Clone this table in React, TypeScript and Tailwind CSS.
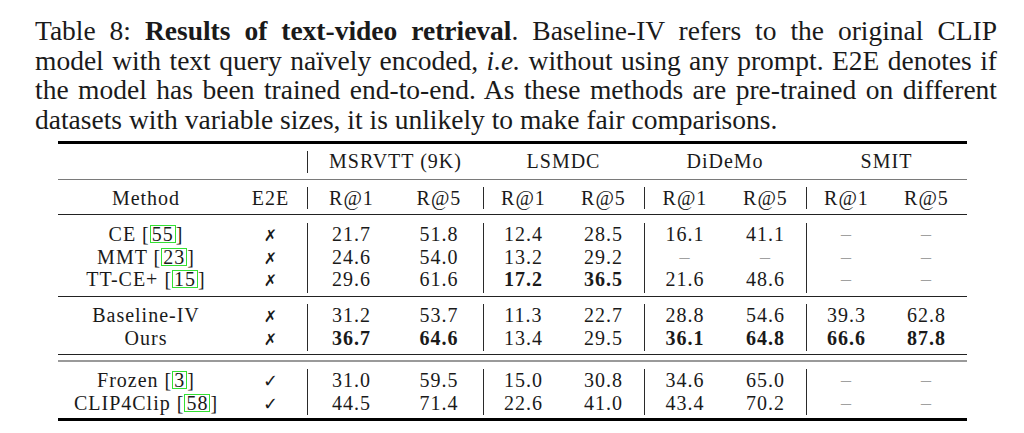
import React from "react";

type Row = { m: string; ref?: string; e: "x" | "c"; v: string[] };

const group1: Row[] = [
  { m: "CE", ref: "55", e: "x", v: ["21.7", "51.8", "12.4", "28.5", "16.1", "41.1", "-", "-"] },
  { m: "MMT", ref: "23", e: "x", v: ["24.6", "54.0", "13.2", "29.2", "-", "-", "-", "-"] },
  { m: "TT-CE+", ref: "15", e: "x", v: ["29.6", "61.6", "*17.2", "*36.5", "21.6", "48.6", "-", "-"] },
];
const group2: Row[] = [
  { m: "Baseline-IV", e: "x", v: ["31.2", "53.7", "11.3", "22.7", "28.8", "54.6", "39.3", "62.8"] },
  { m: "Ours", e: "x", v: ["*36.7", "*64.6", "13.4", "29.5", "*36.1", "*64.8", "*66.6", "*87.8"] },
];
const group3: Row[] = [
  { m: "Frozen", ref: "3", e: "c", v: ["31.0", "59.5", "15.0", "30.8", "34.6", "65.0", "-", "-"] },
  { m: "CLIP4Clip", ref: "58", e: "c", v: ["44.5", "71.4", "22.6", "41.0", "43.4", "70.2", "-", "-"] },
];

const grid =
  "grid grid-cols-[176px_73px_88px_88px_80px_81px_81px_81px_80px_81px]";

function Val({ s }: { s: string }) {
  if (s === "-") return <span className="text-[#a0a0a0]">–</span>;
  if (s.startsWith("*")) return <span className="font-bold">{s.slice(1)}</span>;
  return <span>{s}</span>;
}

function Mark({ e }: { e: "x" | "c" }) {
  return e === "x" ? (
    <span className="[font-family:'DejaVu_Sans'] text-[16px] font-bold tracking-normal">✗</span>
  ) : (
    <span className="[font-family:'DejaVu_Sans'] text-[18px] tracking-normal">✓</span>
  );
}

function DataRow({ r }: { r: Row }) {
  return (
    <div className={`${grid} h-[22.5px] leading-[22.5px]`}>
      <div className="text-center whitespace-nowrap">
        {r.m}
        {r.ref && (
          <>
            {" "}[
            <span className="inline-block border border-[#33e033] leading-[16px] px-[1px] tracking-[1px]">
              {r.ref}
            </span>
            ]
          </>
        )}
      </div>
      <div className="text-center">
        <Mark e={r.e} />
      </div>
      {r.v.map((s, i) => (
        <div
          key={i}
          className={`text-center ${i % 2 === 0 ? "border-l border-[#2a2a2a]" : ""}`}
        >
          <Val s={s} />
        </div>
      ))}
    </div>
  );
}

export default function App() {
  return (
    <div className="w-[1024px] h-[433px] bg-white overflow-hidden text-[#1a1a1a] [font-family:'Liberation_Serif']">
      <div className="ml-[35px] w-[962px] pt-[16px] text-[27.5px] leading-[29.5px]">
        <div className="text-justify [text-align-last:justify] whitespace-nowrap">
          Table 8: <span className="font-bold">Results of text-video retrieval</span>. Baseline-IV refers to the original CLIP
        </div>
        <div className="text-justify [text-align-last:justify] whitespace-nowrap">
          model with text query naïvely encoded, <i>i.e.</i> without using any prompt. E2E denotes if
        </div>
        <div className="text-justify [text-align-last:justify] whitespace-nowrap">
          the model has been trained end-to-end. As these methods are pre-trained on different
        </div>
        <div className="whitespace-nowrap">datasets with variable sizes, it is unlikely to make fair comparisons.</div>
      </div>

      <div className="ml-[58px] mt-[7px] w-[909px] text-[20px] tracking-[1px]">
        <div className="h-[3px] bg-black" />
        <div className={`${grid} mt-[7px] h-[22px] leading-[20px]`}>
          <div className="col-span-2" />
          <div className="col-span-2 text-center border-l border-[#2a2a2a]">MSRVTT (9K)</div>
          <div className="col-span-2 text-center">LSMDC</div>
          <div className="col-span-2 text-center">DiDeMo</div>
          <div className="col-span-2 text-center">SMIT</div>
        </div>
        <div className="mt-[6px] h-[1px] bg-[#7a7a7a]" />
        <div className={`${grid} mt-[7px] h-[22px] leading-[22px]`}>
          <div className="text-center">Method</div>
          <div className="text-center">E2E</div>
          {["R@1", "R@5", "R@1", "R@5", "R@1", "R@5", "R@1", "R@5"].map((s, i) => (
            <div
              key={i}
              className={`text-center ${i % 2 === 0 ? "border-l border-[#2a2a2a]" : ""}`}
            >
              {s}
            </div>
          ))}
        </div>
        <div className="mt-[5px] h-[1px] bg-[#222]" />
        <div className="mt-[8px]">
          {group1.map((r, i) => (
            <DataRow key={i} r={r} />
          ))}
        </div>
        <div className="mt-[5px] h-[1px] bg-[#222]" />
        <div className="mt-[7.5px]">
          {group2.map((r, i) => (
            <DataRow key={i} r={r} />
          ))}
        </div>
        <div className="mt-[5px] h-[1px] bg-[#222]" />
        <div className="mt-[4.5px] h-[2px] bg-[#9a9a9a]" />
        <div className="mt-[7.5px]">
          {group3.map((r, i) => (
            <DataRow key={i} r={r} />
          ))}
        </div>
        <div className="mt-[4px] h-[3px] bg-black" />
      </div>
    </div>
  );
}
